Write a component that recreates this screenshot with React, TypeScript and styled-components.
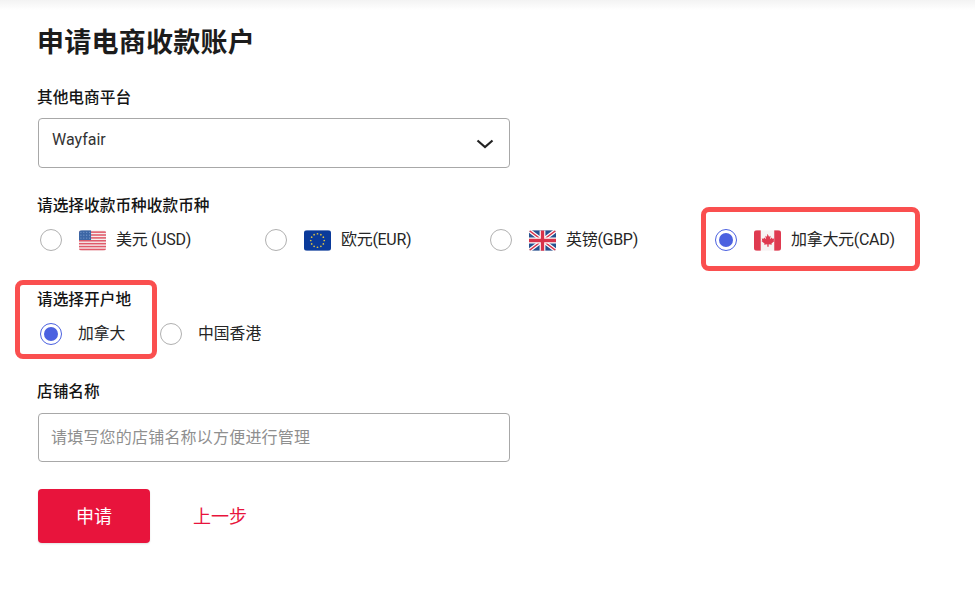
import React from "react";
import styled, { createGlobalStyle } from "styled-components";

const Global = createGlobalStyle`
  html, body { margin: 0; padding: 0; background: #fff; }
  body { font-family: Roboto, "Noto Sans CJK SC", sans-serif; color: #1a1a1a; }
`;

const Page = styled.div`
  position: relative;
  width: 975px;
  height: 607px;
  overflow: hidden;
  box-sizing: border-box;
  padding: 0 38px;
  background: linear-gradient(#f3f3f3, #fff 10px);
`;

const Title = styled.h1`
  margin: 0 0 0 -1px;
  padding-top: 24px;
  font-size: 27px;
  line-height: 38px;
  font-weight: 700;
  letter-spacing: 0.25px;
  color: #1c1c1c;
`;

const Label = styled.div<{ $top: number }>`
  margin: ${(p) => p.$top}px 0 0 -1px;
  font-size: 15.7px;
  line-height: 22px;
  font-weight: 500;
  color: #141414;
`;

const SelectBox = styled.div`
  box-sizing: border-box;
  width: 472px;
  height: 50px;
  margin-top: 9px;
  padding: 9px 13px 0;
  display: flex;
  justify-content: space-between;
  align-items: flex-start;
  border: 1px solid #a8a8a8;
  border-radius: 4px;
  font-size: 16px;
  line-height: 24px;
  color: #333;
`;

const Chevron = styled.svg`
  width: 18px;
  height: 10px;
  margin-top: 11px;
  margin-right: 2px;
`;

const CurrencyRow = styled.div`
  display: grid;
  grid-template-columns: repeat(4, 225px);
  margin-top: 11px;
  padding-left: 2px;
  letter-spacing: -0.3px;
`;

const Option = styled.label`
  display: flex;
  align-items: center;
  height: 24px;
  font-size: 16px;
  line-height: 24px;
  color: #262626;
`;

const Radio = styled.span<{ $on?: boolean }>`
  box-sizing: border-box;
  flex: none;
  width: 22px;
  height: 22px;
  border-radius: 50%;
  border: 1px solid ${(p) => (p.$on ? "#4b61e0" : "#b0b0b0")};
  background: #fff;
  display: flex;
  align-items: center;
  justify-content: center;
  &::after {
    content: "";
    display: ${(p) => (p.$on ? "block" : "none")};
    width: 14px;
    height: 14px;
    border-radius: 50%;
    background: #4b61e0;
  }
`;

const Flag = styled.svg`
  flex: none;
  width: 27px;
  height: 21px;
  margin: 0 10px 0 17px;
  border-radius: 3px;
`;

const RegionRow = styled.div`
  display: flex;
  margin-top: 11px;
  padding-left: 2px;
`;

const RegionOption = styled(Option)<{ $width: number }>`
  width: ${(p) => p.$width}px;
`;

const RegionText = styled.span`
  margin-left: 16px;
  font-size: 15.8px;
`;

const NameInput = styled.input`
  box-sizing: border-box;
  display: block;
  width: 472px;
  height: 49px;
  margin-top: 10px;
  padding: 0 12px;
  border: 1px solid #a8a8a8;
  border-radius: 4px;
  font: 16px Roboto, "Noto Sans CJK SC", sans-serif;
  letter-spacing: 0.2px;
  color: #333;
  outline: none;
  &::placeholder { color: #8f8f8f; opacity: 1; }
`;

const Actions = styled.div`
  display: flex;
  align-items: center;
  gap: 43px;
  margin-top: 27px;
`;

const Submit = styled.button`
  width: 112px;
  height: 54px;
  padding: 0 0 2px;
  border: none;
  border-radius: 4px;
  background: #e8143c;
  color: #fff;
  font: 18px Roboto, "Noto Sans CJK SC", sans-serif;
  box-shadow: 0 1px 2px rgba(0, 0, 0, 0.12);
`;

const BackLink = styled.a`
  font-size: 18px;
  line-height: 24px;
  margin-top: 2px;
  color: #e8143c;
`;

const Highlight = styled.div<{ $x: number; $y: number; $w: number; $h: number }>`
  position: absolute;
  box-sizing: border-box;
  left: ${(p) => p.$x}px;
  top: ${(p) => p.$y}px;
  width: ${(p) => p.$w}px;
  height: ${(p) => p.$h}px;
  border: 5px solid #fa4f4f;
  border-radius: 8px;
  pointer-events: none;
`;

const star = (cx: number, cy: number, key: number) => (
  <circle key={key} cx={cx} cy={cy} r="0.9" fill="#d9bf45" />
);

const UsFlag = () => (
  <Flag viewBox="0 0 28 21">
    <rect width="28" height="21" fill="#f6eeee" />
    {[1, 4, 7, 10, 13, 16, 19].map((y) => (
      <rect key={y} y={y} width="28" height="1.6" fill="#e05a6a" />
    ))}
    <rect width="12.5" height="10" fill="#3c66a5" />
    {[2, 5, 8].map((y) =>
      [2, 5, 8, 11].map((x) => <circle key={`${x}-${y}`} cx={x} cy={y} r="0.6" fill="#7f9fcf" />)
    )}
  </Flag>
);

const EuFlag = () => (
  <Flag viewBox="0 0 28 21">
    <rect width="28" height="21" fill="#0a3a9a" />
    {Array.from({ length: 12 }).map((_, i) => {
      const a = (i * Math.PI) / 6;
      return star(14 + 7 * Math.sin(a), 10.5 - 7 * Math.cos(a), i);
    })}
  </Flag>
);

const UkFlag = () => (
  <Flag viewBox="0 0 28 21">
    <rect width="28" height="21" fill="#27508f" />
    <path d="M0 0L28 21M28 0L0 21" stroke="#fff" strokeWidth="4" />
    <path d="M0 0L28 21M28 0L0 21" stroke="#d8324a" strokeWidth="1.5" />
    <path d="M14 0V21M0 10.5H28" stroke="#fff" strokeWidth="6" />
    <path d="M14 0V21M0 10.5H28" stroke="#d8324a" strokeWidth="3.5" />
  </Flag>
);

const CaFlag = () => (
  <Flag viewBox="0 0 28 21">
    <rect width="28" height="21" fill="#f7f3f3" />
    <rect width="7" height="21" fill="#df3a50" />
    <rect x="21" width="7" height="21" fill="#df3a50" />
    <path
      d="M14 3.5l1.6 3 1.6-.8-.6 3.6 1.9-1.8.5 1.2 2-.3-.6 2.2.9.5-3.2 2.6.4 1.2-3.3-.4V17h-1.4v-2.5l-3.3.4.4-1.2-3.2-2.6.9-.5-.6-2.2 2 .3.5-1.2 1.9 1.8-.6-3.6 1.6.8z"
      fill="#df3a50"
    />
  </Flag>
);

const currencies = [
  { text: "美元 (USD)", flag: <UsFlag /> },
  { text: "欧元(EUR)", flag: <EuFlag /> },
  { text: "英镑(GBP)", flag: <UkFlag /> },
  { text: "加拿大元(CAD)", flag: <CaFlag />, on: true },
];

export default function App() {
  return (
    <Page>
      <Global />
      <Title>申请电商收款账户</Title>
      <Label $top={25}>其他电商平台</Label>
      <SelectBox>
        <span>Wayfair</span>
        <Chevron viewBox="0 0 18 10">
          <path d="M1.5 1.5L9 8l7.5-6.5" fill="none" stroke="#222" strokeWidth="2.2" />
        </Chevron>
      </SelectBox>
      <Label $top={27}>请选择收款币种收款币种</Label>
      <CurrencyRow>
        {currencies.map((c) => (
          <Option key={c.text}>
            <Radio $on={c.on} />
            {c.flag}
            {c.text}
          </Option>
        ))}
      </CurrencyRow>
      <Label $top={37}>请选择开户地</Label>
      <RegionRow>
        <RegionOption $width={120}>
          <Radio $on />
          <RegionText>加拿大</RegionText>
        </RegionOption>
        <RegionOption $width={120}>
          <Radio />
          <RegionText>中国香港</RegionText>
        </RegionOption>
      </RegionRow>
      <Label $top={35}>店铺名称</Label>
      <NameInput placeholder="请填写您的店铺名称以方便进行管理" />
      <Actions>
        <Submit>申请</Submit>
        <BackLink>上一步</BackLink>
      </Actions>
      <Highlight $x={701} $y={207} $w={219} $h={64} />
      <Highlight $x={15} $y={280} $w={142} $h={79} />
    </Page>
  );
}
